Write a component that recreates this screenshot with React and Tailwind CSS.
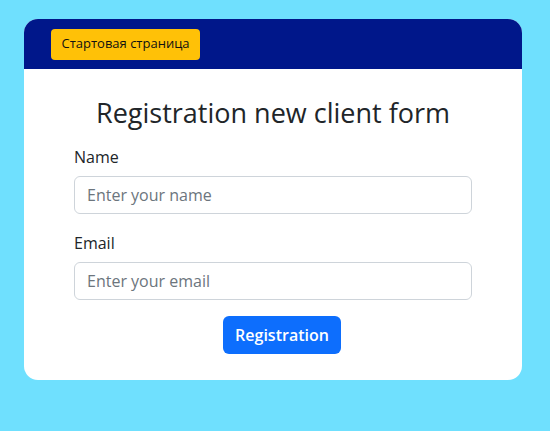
export default function App() {
  return (
    <div className="min-h-[431px] w-[550px] bg-[#6fe0fe] pt-[19px] pl-[24px]" style={{ fontFamily: '"Comic Sans MS", "Open Sans", sans-serif' }}>
      <div className="w-[498px] overflow-hidden rounded-[14px] bg-white">
        <div className="flex h-[50px] items-center bg-[#00178a] pl-[27px]">
          <button className="h-[31px] w-[149px] rounded-[4px] bg-[#ffc107] text-[13px] text-[#111]">
            Стартовая страница
          </button>
        </div>
        <div className="px-[50px] pb-[26px]">
          <h1 className="mt-[27px] text-center text-[27px] leading-[34px] text-[#212529]">
            Registration new client form
          </h1>
          <div className="mt-[15px] text-[16px] leading-[24px] text-[#212529]">Name</div>
          <input
            className="mt-[7px] block h-[38px] w-full rounded-[6px] border border-[#ced4da] px-[12px] text-[16px] placeholder:text-[#6c757d] outline-none"
            placeholder="Enter your name"
          />
          <div className="mt-[17px] text-[16px] leading-[24px] text-[#212529]">Email</div>
          <input
            className="mt-[7px] block h-[38px] w-full rounded-[6px] border border-[#ced4da] px-[12px] text-[16px] placeholder:text-[#6c757d] outline-none"
            placeholder="Enter your email"
          />
          <div className="mt-[16px] flex">
            <button className="ml-[149px] h-[38px] w-[118px] rounded-[6px] bg-[#0d6efd] text-[16px] font-semibold text-white">
              Registration
            </button>
          </div>
        </div>
      </div>
    </div>
  );
}
